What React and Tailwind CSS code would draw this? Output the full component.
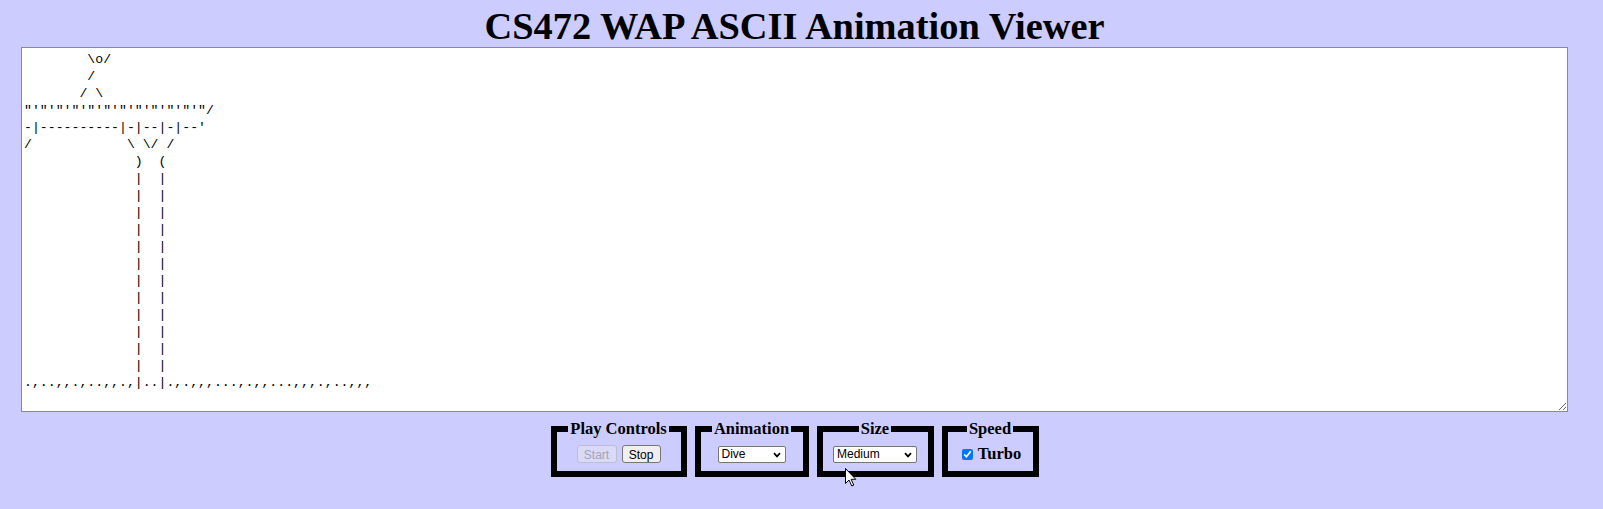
import React from 'react';

const art = [
  "        \\o/",
  "        /",
  "       / \\",
  "\"'\"'\"'\"'\"'\"'\"'\"'\"'\"'\"'\"/",
  "-|----------|-|--|-|--'",
  "/            \\ \\/ /",
  "              )  (",
  ...Array(12).fill("              |  |"),
  ".,..,,.,..,,.,|..|.,.,,,...,.,,...,,,.,..,,,",
].join("\n");

function Group({ title, className, children }) {
  return (
    <fieldset className={`border-[6px] border-black pt-[7px] pb-[8px] ${className}`}>
      <legend className="mx-auto px-[2px] text-[16.5px] font-bold leading-[19px]">{title}</legend>
      <div className="flex h-[18px] items-center justify-center">{children}</div>
    </fieldset>
  );
}

function Picker({ value, options, className }) {
  return (
    <div className={`relative ${className}`}>
      <select
        defaultValue={value}
        className="block h-[17px] w-full appearance-none rounded-[2px] border border-[#767676] bg-white pl-[3px] font-['Liberation_Sans',Arial,sans-serif] text-[12px] leading-[15px] text-black"
      >
        {options.map((o) => (
          <option key={o}>{o}</option>
        ))}
      </select>
      <svg className="pointer-events-none absolute right-[5px] top-[6px]" width="8" height="6" viewBox="0 0 8 6">
        <path d="M1 1.2 L4 4.4 L7 1.2" stroke="black" strokeWidth="1.7" fill="none" />
      </svg>
    </div>
  );
}

export default function App() {
  return (
    <div className="relative min-h-screen bg-[#ccccff] font-['Liberation_Serif','Times_New_Roman',serif] text-black">
      <div className="w-[1589px] px-[21px]">
        <h1 className="pt-[5px] text-center text-[38.4px] font-bold leading-[42px]">
          CS472 WAP ASCII Animation Viewer
        </h1>

        <textarea
          readOnly
          spellCheck={false}
          value={art}
          className="block h-[365px] w-full resize border border-[#8a8a8a] bg-white px-[2px] pt-[3px] font-['Liberation_Mono','Courier_New',monospace] text-[13.2px] leading-[17px] text-black outline-none"
        />

        <div className="mt-[7px] flex justify-center gap-2">
          <Group title="Play Controls" className="w-[136px]">
            <div className="flex gap-[5px] font-['Liberation_Sans',Arial,sans-serif] text-[12px]">
              <button
                disabled
                className="h-[18px] w-[40px] rounded-[3px] border border-[#bdbdd8] bg-[#dadaf7] text-[#a3a3b8]"
              >
                Start
              </button>
              <button className="h-[18px] w-[39px] rounded-[3px] border border-[#767676] bg-[#efefef] text-black">
                Stop
              </button>
            </div>
          </Group>

          <Group title="Animation" className="w-[114px]">
            <Picker value="Dive" options={["Blank", "Exercise", "Juggler", "Bike", "Dive", "Custom"]} className="w-[68px]" />
          </Group>

          <Group title="Size" className="w-[117px]">
            <Picker value="Medium" options={["Tiny", "Small", "Medium", "Large", "Extra Large", "XXL"]} className="w-[84px]" />
          </Group>

          <Group title="Speed" className="w-[97px]">
            <label className="ml-[3px] flex items-center gap-[5px] text-[16.5px] font-bold">
              <input type="checkbox" defaultChecked className="h-[11px] w-[11px] accent-[#0075ff]" />
              Turbo
            </label>
          </Group>
        </div>
      </div>

      {/* mouse pointer left in the capture */}
      <svg className="pointer-events-none absolute left-[845px] top-[468px]" width="12" height="19" viewBox="0 0 12 19">
        <path d="M0.5 0.5 L0.5 15.5 L4 12 L6.8 18 L8.8 17.1 L6.1 11.3 L10.8 11.3 Z" fill="white" stroke="black" strokeWidth="1" />
      </svg>
    </div>
  );
}
